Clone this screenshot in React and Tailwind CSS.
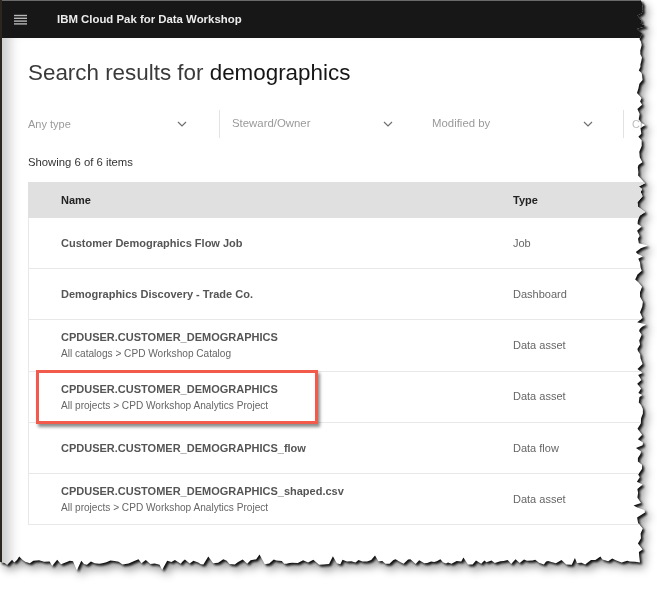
import React from "react";

function rng(seed) {
  let s = seed;
  return () => {
    s = (s * 1103515245 + 12345) % 2147483648;
    return s / 2147483648;
  };
}

function tornPolygon() {
  const r = rng(7);
  const pts = ["0px 0px"];
  const right = 640;
  const bottom = 562;
  let y = 0;
  while (y < bottom) {
    const jag = (r() - 0.5) * 6 + (r() < 0.12 ? (r() - 0.5) * 12 : 0);
    pts.push(`${(right + jag).toFixed(1)}px ${y.toFixed(1)}px`);
    y += 2 + r() * 4;
  }
  let x = right;
  while (x > 0) {
    const jag = (r() - 0.5) * 6 + (r() < 0.12 ? (r() - 0.5) * 12 : 0);
    pts.push(`${x.toFixed(1)}px ${(bottom + jag).toFixed(1)}px`);
    x -= 2 + r() * 4;
  }
  pts.push(`0px ${bottom}px`);
  return `polygon(${pts.join(", ")})`;
}

const Chevron = () => (
  <svg width="10" height="6" viewBox="0 0 10 6" className="shrink-0">
    <path d="M1 1 L5 5 L9 1" fill="none" stroke="#6f6f6f" strokeWidth="1.2" />
  </svg>
);

const rows = [
  { name: "Customer Demographics Flow Job", type: "Job" },
  { name: "Demographics Discovery - Trade Co.", type: "Dashboard" },
  { name: "CPDUSER.CUSTOMER_DEMOGRAPHICS", sub: "All catalogs > CPD Workshop Catalog", type: "Data asset" },
  { name: "CPDUSER.CUSTOMER_DEMOGRAPHICS", sub: "All projects > CPD Workshop Analytics Project", type: "Data asset", hl: true },
  { name: "CPDUSER.CUSTOMER_DEMOGRAPHICS_flow", type: "Data flow" },
  { name: "CPDUSER.CUSTOMER_DEMOGRAPHICS_shaped.csv", sub: "All projects > CPD Workshop Analytics Project", type: "Data asset" },
];

export default function App() {
  const clip = tornPolygon();
  return (
    <div className="w-[657px] h-[589px] bg-white overflow-hidden font-['Liberation_Sans',Arial,sans-serif]">
      <div className="[filter:drop-shadow(2px_2px_1px_rgba(0,0,0,0.9))_drop-shadow(3px_4px_4px_rgba(0,0,0,0.4))]">
        <div
          className="w-[657px] h-[589px] bg-white border-l-2 border-[#2b2620] flex flex-col"
          style={{ clipPath: clip }}
        >
          <div className="h-[38px] shrink-0 bg-[#171717] border-t border-[#6a6a6a] flex items-center">
            <svg width="14" height="12" viewBox="0 0 14 12" className="ml-[12px] shrink-0">
              <g stroke="#b8b8b8" strokeWidth="1.4">
                <line x1="0" y1="1.5" x2="13" y2="1.5" />
                <line x1="0" y1="4.3" x2="13" y2="4.3" />
                <line x1="0" y1="7.1" x2="13" y2="7.1" />
                <line x1="0" y1="9.9" x2="13" y2="9.9" />
              </g>
            </svg>
            <span className="ml-[29px] text-[11.4px] font-bold text-[#ececec]">
              IBM Cloud Pak for Data Workshop
            </span>
          </div>
          <div className="flex-1 pl-[26px] shadow-[inset_16px_0_12px_-8px_rgba(0,0,0,0.2)]">
            <div className="pt-[22px] text-[22.4px] leading-[26px] text-[#3a3a3a] whitespace-nowrap">
              Search results for <span className="text-[#161616]">demographics</span>
            </div>
            <div className="mt-[23px] flex h-[30px] items-center text-[11px] text-[#9a9a9a] whitespace-nowrap">
              <div className="w-[191px] shrink-0 flex items-center justify-between pr-[32px]">
                <span>Any type</span>
                <Chevron />
              </div>
              <div className="w-px shrink-0 h-[28px] bg-[#e2e2e2]" />
              <div className="w-[200px] shrink-0 flex items-center justify-between pl-[12px] pr-[27px]">
                <span className="text-[11.4px]">Steward/Owner</span>
                <Chevron />
              </div>
              <div className="w-[203px] shrink-0 flex items-center justify-between pl-[12px] pr-[30px]">
                <span className="text-[11.4px]">Modified by</span>
                <Chevron />
              </div>
              <div className="w-px shrink-0 h-[28px] bg-[#e2e2e2]" />
              <div className="pl-[8px] text-[#bdbdbd] shrink-0">Created</div>
            </div>
            <div className="mt-[15px] text-[11.3px] text-[#333]">Showing 6 of 6 items</div>
            <div className="mt-[11px] w-[640px] relative">
              <div className="h-[36px] bg-[#e0e0e0] flex items-center text-[11px] font-bold text-[#222]">
                <div className="w-[485px] pl-[33px]">Name</div>
                <div>Type</div>
              </div>
              <div className="border-l border-[#e8e8e8]">
                {rows.map((r, i) => (
                  <div
                    key={i}
                    className="h-[51.2px] border-b border-[#e8e8e8] flex items-center relative"
                  >
                    <div className="w-[484px] pl-[32px] flex flex-col justify-center">
                      <div className="text-[11px] font-bold text-[#555] leading-[14px] whitespace-nowrap">{r.name}</div>
                      {r.sub && (
                        <div className="text-[10.1px] text-[#666] leading-[13px] mt-[3px] whitespace-nowrap">{r.sub}</div>
                      )}
                    </div>
                    <div className="text-[11px] text-[#666]">{r.type}</div>
                    {r.hl && (
                      <div className="absolute left-[7px] top-[-2px] w-[282px] h-[54px] border-[3px] border-[#f25a4b] shadow-[2px_3px_3px_rgba(0,0,0,0.45)]" />
                    )}
                  </div>
                ))}
              </div>
            </div>
          </div>
        </div>
      </div>
    </div>
  );
}
